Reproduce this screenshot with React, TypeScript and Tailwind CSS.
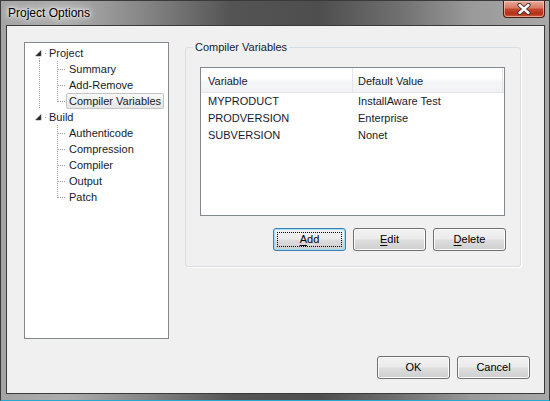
import React from 'react';

/** dialog font: Tahoma-ish widths */
const UI = "[font-family:'Liberation_Sans',Arial,sans-serif]";

interface TreeNode {
  label: string;
  children: string[];
}

const tree: TreeNode[] = [
  { label: 'Project', children: ['Summary', 'Add-Remove', 'Compiler Variables'] },
  { label: 'Build', children: ['Authenticode', 'Compression', 'Compiler', 'Output', 'Patch'] },
];

const variables = [
  { name: 'MYPRODUCT', value: 'InstallAware Test' },
  { name: 'PRODVERSION', value: 'Enterprise' },
  { name: 'SUBVERSION', value: 'Nonet' },
];

const dot = { stroke: '#a0a0a0', strokeWidth: 1, strokeDasharray: '1 1', shapeRendering: 'crispEdges' as const };

const TreeLabel: React.FC<{ text: string; selected?: boolean }> = ({ text, selected }) => (
  <span
    className={`h-[16px] px-[2px] flex items-center rounded-[2px] border whitespace-nowrap ${
      selected
        ? 'border-[#c4c4c4] bg-[linear-gradient(#f9f9f9,#e6e6e6)]'
        : 'border-transparent'
    }`}
  >
    {text}
  </span>
);

const RootRow: React.FC<{ node: TreeNode; last: boolean }> = ({ node, last }) => (
  <div className="flex h-[16px] items-center">
    <svg width="21" height="16" className="shrink-0">
      {!last && <line x1="14.5" y1="13" x2="14.5" y2="16" style={dot} />}
      <path d="M16 5.5 L16 11 L10.5 11 Z" fill="#262626" stroke="#5a5a5a" strokeWidth="0.5" />
      <rect x="20" y="8" width="1" height="1" fill="#a0a0a0" />
    </svg>
    <TreeLabel text={node.label} />
  </div>
);

const ChildRow: React.FC<{ text: string; parentLast: boolean; last: boolean; selected: boolean }> = ({
  text,
  parentLast,
  last,
  selected,
}) => (
  <div className="flex h-[16px] items-center">
    <svg width="41" height="16" className="shrink-0">
      {!parentLast && <line x1="14.5" y1="0" x2="14.5" y2="16" style={dot} />}
      <line x1="32.5" y1="0" x2="32.5" y2={last ? 9 : 16} style={dot} />
      <line x1="33" y1="8.5" x2="42" y2="8.5" style={dot} />
    </svg>
    <TreeLabel text={text} selected={selected} />
  </div>
);

const WinButton: React.FC<{ children: React.ReactNode; focused?: boolean }> = ({ children, focused }) => (
  <button
    className={`relative w-[73px] h-[23px] rounded-[3px] border flex items-center justify-center text-[11px] text-black bg-[linear-gradient(#f2f2f2_0%,#ebebeb_48%,#dddddd_52%,#cfcfcf_100%)] ${
      focused
        ? 'border-[#3c7fb1] shadow-[inset_0_0_0_1px_#9fdcf5]'
        : 'border-[#707070] shadow-[inset_0_0_0_1px_#fbfbfb]'
    }`}
  >
    {focused && <span className="absolute inset-[3px] border border-dotted border-black" />}
    {children}
  </button>
);

export default function App() {
  return (
    <div
      className={`${UI} w-[550px] h-[401px] overflow-hidden flex flex-col border border-[#3a3a3a] border-b-[#2aa7cf] bg-[linear-gradient(90deg,#a4a4a4_0%,#acacac_12%,#868686_26%,#545454_42%,#4e4e4e_58%,#6e6e6e_72%,#9a9a9a_86%,#a8a8a8_100%)]`}
    >
      {/* title bar */}
      <div className="h-[24px] flex items-start justify-between shrink-0">
        <span className="pl-[7px] pt-[5px] text-[12px] leading-[14px] text-black [text-shadow:0_0_10px_#fff,0_0_6px_#fff,0_0_3px_#fff]">
          Project Options
        </span>
        <div className="mr-[4px] w-[42px] h-[17px] rounded-b-[4px] border border-t-0 border-[#4a1b12] shadow-[inset_0_0_0_1px_rgba(255,220,210,0.55)] bg-[linear-gradient(#e9ab9a_0%,#d87a64_42%,#c4472d_52%,#b5311a_80%,#cf5c3c_100%)] flex items-center justify-center">
          <svg width="16" height="12" viewBox="0 0 16 12">
            <path d="M3.5 2 L12.5 10 M12.5 2 L3.5 10" stroke="#3a2a28" strokeWidth="4.2" strokeLinecap="round" />
            <path d="M3.5 2 L12.5 10 M12.5 2 L3.5 10" stroke="#ffffff" strokeWidth="2.4" strokeLinecap="round" />
          </svg>
        </div>
      </div>

      {/* client area */}
      <div className="ml-[5px] w-[539px] h-[369px] shrink-0 border border-[#3a3a3a] bg-[#f0f0f0] flex flex-col text-[11px] text-[#151b2d]">
        <div className="flex items-start">
          {/* options tree */}
          <div className="ml-[17px] mt-[16px] w-[145px] h-[297px] bg-white border border-[#828790] pt-[2px] pl-0">
            {tree.map((node, i) => {
              const parentLast = i === tree.length - 1;
              return (
                <div key={node.label}>
                  <RootRow node={node} last={parentLast} />
                  {node.children.map((c, j) => (
                    <ChildRow
                      key={c}
                      text={c}
                      parentLast={parentLast}
                      last={j === node.children.length - 1}
                      selected={c === 'Compiler Variables'}
                    />
                  ))}
                </div>
              );
            })}
          </div>

          {/* group box */}
          <fieldset className="ml-[16px] mt-[15px] w-[336px] border border-[#d5dfe5] rounded-[3px] shadow-[1px_1px_0_#ffffff] pb-[15px]">
            <legend className="ml-[7px] px-[2px] text-[11px] leading-[12px]">Compiler Variables</legend>

            <div className="ml-[14px] mt-[14px] w-[305px] h-[149px] bg-white border border-[#828790]">
              <div className="flex h-[25px] border-b border-[#e3e5e8] bg-[linear-gradient(#ffffff_0%,#ffffff_45%,#f5f6f7_55%,#f1f2f4_100%)]">
                <div className="w-[152px] pl-[7px] pt-[3px] flex items-center border-r border-[#e3e5e8]">Variable</div>
                <div className="w-[150px] pl-[5px] pt-[3px] flex items-center border-r border-[#e3e5e8]">Default Value</div>
              </div>
              {variables.map((v) => (
                <div key={v.name} className="flex h-[17px] items-center">
                  <div className="w-[152px] pl-[7px]">{v.name}</div>
                  <div className="w-[150px] pl-[5px]">{v.value}</div>
                </div>
              ))}
            </div>

            <div className="mt-[12px] pr-[14px] flex justify-end gap-[7px]">
              <WinButton focused>
                <span className="underline underline-offset-2">A</span>dd
              </WinButton>
              <WinButton>
                <span className="underline underline-offset-2">E</span>dit
              </WinButton>
              <WinButton>
                <span className="underline underline-offset-2">D</span>elete
              </WinButton>
            </div>
          </fieldset>
        </div>

        {/* dialog buttons */}
        <div className="mt-auto pr-[14px] pb-[14px] flex justify-end gap-[7px]">
          <WinButton>OK</WinButton>
          <WinButton>Cancel</WinButton>
        </div>
      </div>
    </div>
  );
}
